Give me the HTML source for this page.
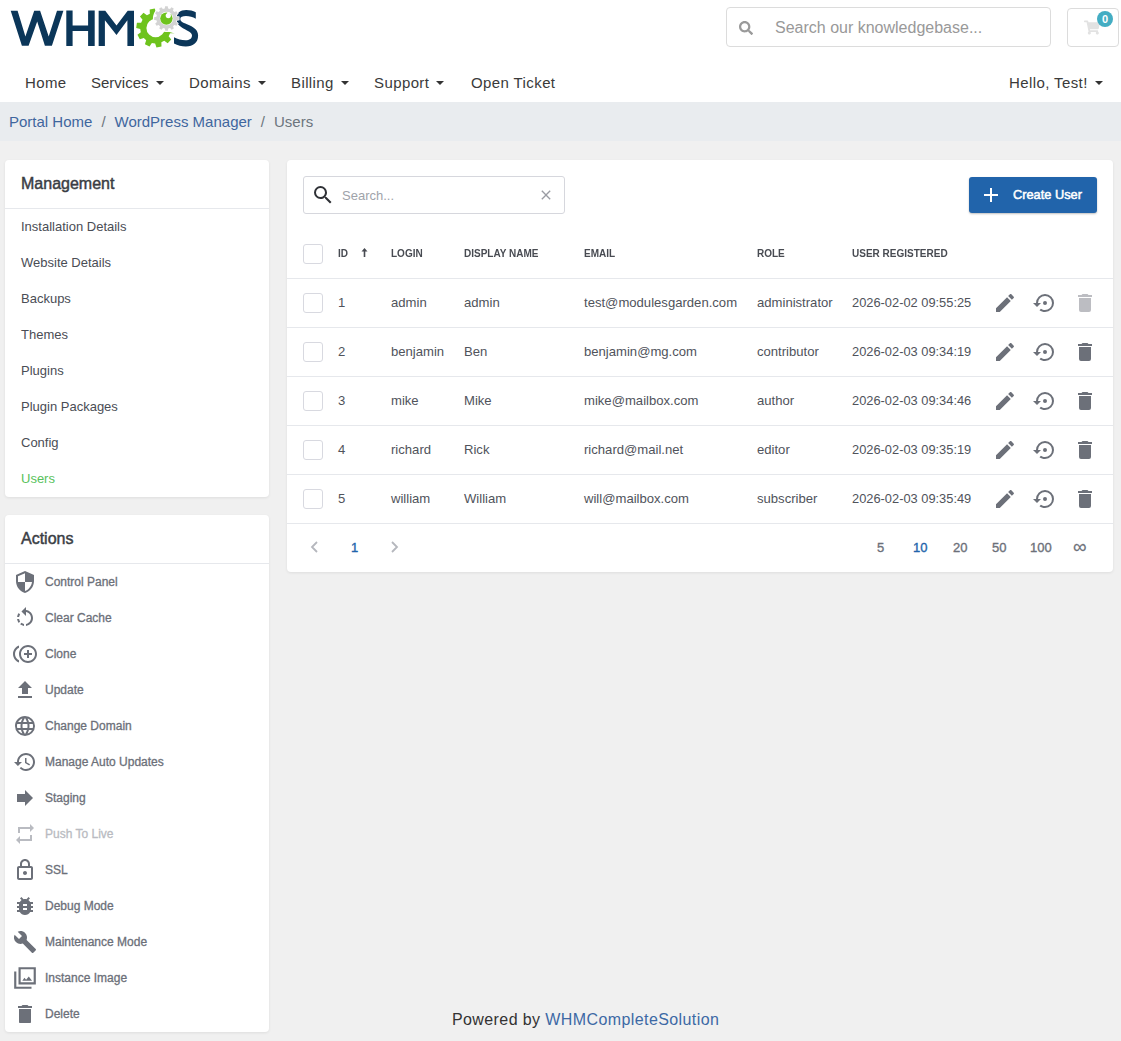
<!DOCTYPE html>
<html><head><meta charset="utf-8">
<style>
*{box-sizing:border-box;margin:0;padding:0}
html,body{width:1121px;height:1041px;overflow:hidden}
body{font-family:"Liberation Sans",sans-serif;background:#f0f0f0;position:relative;color:#4a4d55}
.abs{position:absolute}
#header{position:absolute;left:0;top:0;width:1121px;height:102px;background:#fff}
#crumb{position:absolute;left:0;top:102px;width:1121px;height:39px;background:#e9ecef}
.nav{position:absolute;top:74px;font-size:15px;color:#3a3a3a;letter-spacing:0.4px;white-space:nowrap;line-height:18px}
.caret{letter-spacing:0;display:inline-block;width:0;height:0;border-left:4.5px solid transparent;border-right:4.5px solid transparent;border-top:4.5px solid #333;vertical-align:middle;margin-left:7px;position:relative;top:-1px}
.card{position:absolute;background:#fff;border-radius:4px;box-shadow:0 1px 3px rgba(0,0,0,.08)}
.ctitle{position:absolute;left:16px;font-size:16px;color:#3a3d44;line-height:18px;-webkit-text-stroke:0.45px}
.divider{position:absolute;left:0;right:0;height:1px;background:#e6e8ec}
.mi{position:absolute;margin-top:1px;left:16px;font-size:13px;color:#4a4d55;line-height:16px;white-space:nowrap}
.ai{position:absolute;left:40px;font-size:12px;color:#6c7079;line-height:18px;white-space:nowrap;-webkit-text-stroke:0.3px}
.cb{position:absolute;margin-top:1px;left:16px;width:20px;height:20px;border:1px solid #d8d9e0;border-radius:3px;background:#fff}
.th{position:absolute;font-size:11.5px;font-weight:bold;color:#484b52;line-height:16px;white-space:nowrap;transform:scaleX(0.87);transform-origin:0 0}
.td{position:absolute;font-size:13.1px;color:#50535b;line-height:18px;white-space:nowrap}
.pg{position:absolute;margin-top:1px;font-size:13px;line-height:16px;white-space:nowrap;-webkit-text-stroke:0.35px}
.ico{position:absolute;left:8px;width:24px;height:24px}
</style></head>
<body>
<div id="header">
  <svg class="abs" style="left:0;top:0" width="210" height="56" viewBox="0 0 210 56">
<defs><mask id="gm"><rect x="0" y="0" width="210" height="56" fill="#fff"/><path d="M155.6,28 L165.86,-0.19 L181.93,13.62 L184.44,36.27Z" fill="#000"/><circle cx="166.5" cy="18.5" r="13.6" fill="#000"/></mask></defs>
<path fill="#0b3659" d="M10.7,10.7 L17.6,10.7 L25.4,36.4 L34.2,10.7 L40.1,10.7 L48.7,36.4 L57,10.7 L63.4,10.7 L51.9,45.7 L44.9,45.7 L37.2,21.4 L28.6,45.7 L21.9,45.7Z M66.3,10.6 L72.6,10.6 L72.6,25.5 L88.1,25.5 L88.1,10.6 L94.7,10.6 L94.7,46 L88.1,46 L88.1,31.1 L72.6,31.1 L72.6,46 L66.3,46Z M98.65,10.64 L105.25,10.64 L116.5,25.5 L127.7,10.64 L134,10.64 L134,45.95 L127.4,45.95 L127.4,20.2 L116.5,35.06 L104.9,20.2 L104.9,45.95 L98.65,45.95Z"/>
<path fill="#6ec31d" fill-rule="evenodd" mask="url(#gm)" d="M149.83,13.72 L149.71,9.52 L154.73,8.62 L156.07,12.61 L159.33,13.06 L161.70,9.58 L166.29,11.81 L165.03,15.83 L167.40,18.10 L171.36,16.68 L173.76,21.19 L170.39,23.69 L170.96,26.93 L175.00,28.11 L174.30,33.16 L170.09,33.21 L168.66,36.16 L171.23,39.49 L167.69,43.17 L164.26,40.73 L161.37,42.28 L161.49,46.48 L156.47,47.38 L155.13,43.39 L151.87,42.94 L149.50,46.42 L144.91,44.19 L146.17,40.17 L143.80,37.90 L139.84,39.32 L137.44,34.81 L140.81,32.31 L140.24,29.07 L136.20,27.89 L136.90,22.84 L141.11,22.79 L142.54,19.84 L139.97,16.51 L143.51,12.83 L146.94,15.27Z M164.80,28.00 A9.2,9.2 0 1,0 146.40,28.00 A9.2,9.2 0 1,0 164.80,28.00Z"/>
<path fill="#0b3659" d="M195.8,12.3 C193,10.8 189.8,10 186.2,10 C180.2,10 176.3,13 176.3,18.8 C176.3,25 181.5,27.5 187,30.4 C190.7,32.2 192,33.5 192,35.6 C192,38.8 189.5,40.3 185.5,40.3 C181.5,40.3 177.5,39.2 174,37.3 L174,43.6 C177.8,45.6 181.5,46.6 185.8,46.6 C193.5,46.6 198.1,42.5 198.1,35.6 C198.1,29.5 193.5,26.8 187,24.2 C182.5,22.4 180.3,21.3 180.3,18.7 C180.3,16.9 182.5,16.1 186,16.1 C189.5,16.1 192.8,17 195.8,18.7 Z"/>
<path fill="#d3d3d3" stroke="#fff" stroke-width="1.4" paint-order="stroke" fill-rule="evenodd" d="M164.73,8.45 L165.12,6.18 L167.71,6.16 L168.13,8.43 L169.99,8.92 L171.46,7.14 L173.72,8.42 L172.95,10.60 L174.31,11.94 L176.48,11.14 L177.79,13.38 L176.04,14.88 L176.55,16.73 L178.82,17.12 L178.84,19.71 L176.57,20.13 L176.08,21.99 L177.86,23.46 L176.58,25.72 L174.40,24.95 L173.06,26.31 L173.86,28.48 L171.62,29.79 L170.12,28.04 L168.27,28.55 L167.88,30.82 L165.29,30.84 L164.87,28.57 L163.01,28.08 L161.54,29.86 L159.28,28.58 L160.05,26.40 L158.69,25.06 L156.52,25.86 L155.21,23.62 L156.96,22.12 L156.45,20.27 L154.18,19.88 L154.16,17.29 L156.43,16.87 L156.92,15.01 L155.14,13.54 L156.42,11.28 L158.60,12.05 L159.94,10.69 L159.14,8.52 L161.38,7.21 L162.88,8.96Z M173.30,18.50 A6.8,6.8 0 1,0 159.70,18.50 A6.8,6.8 0 1,0 173.30,18.50Z"/>
<circle cx="166.4" cy="18.6" r="6.2" fill="#6ec31d"/>
<circle cx="168.3" cy="15.6" r="2.6" fill="#fff"/><path d="M167.5,12 L170,12.5 L169.5,15 L167,14.5Z" fill="#fff"/>
</svg>
  <div class="abs" style="left:726px;top:7px;width:325px;height:40px;border:1px solid #dcdcdc;border-radius:4px"></div>
  <svg class="abs" style="left:739px;top:21px" width="14" height="14" viewBox="0 0 512 512"><path fill="#9a9a9a" d="M505 442.7L405.3 343c-4.5-4.5-10.6-7-17-7H372c27.6-35.3 44-79.700 44-128C416 93.1 322.9 0 208 0S0 93.1 0 208s93.1 208 208 208c48.3 0 92.7-16.4 128-44v16.3c0 6.4 2.5 12.5 7 17l99.7 99.7c9.4 9.4 24.6 9.4 33.9 0l28.3-28.3c9.4-9.4 9.4-24.600 .1-34zM208 336c-70.7 0-128-57.200-128-128 0-70.7 57.2-128 128-128 70.7 0 128 57.2 128 128 0 70.7-57.2 128-128 128z"/></svg>
  <div class="abs" style="left:775px;top:18px;font-size:16px;line-height:19px;color:#999;white-space:nowrap">Search our knowledgebase...</div>
  <div class="abs" style="left:1067px;top:8px;width:52px;height:39px;border:1px solid #dcdcdc;border-radius:4px"></div>
  <svg class="abs" style="left:1084px;top:20px" width="16" height="15" viewBox="0 0 576 512"><path fill="#e2e2e2" d="M528.12 301.319l47.273-208C578.806 78.301 567.391 64 551.99 64H159.208l-9.166-44.810C147.758 8.021 137.930 0 126.529 0H24C10.745 0 0 10.745 0 24v16c0 13.255 10.745 24 24 24h69.883l70.248 343.435C147.325 417.100 136 435.222 136 456c0 30.928 25.072 56 56 56s56-25.072 56-56c0-15.674-6.447-29.835-16.824-40h209.647C430.447 426.165 424 440.326 424 456c0 30.928 25.072 56 56 56s56-25.072 56-56c0-22.172-12.888-41.332-31.579-50.405l5.517-24.276c3.413-15.018-8.002-29.319-23.403-29.319H218.117l-6.545-32h293.145c11.206 0 20.920-7.754 23.403-18.681z"/></svg>
  <div class="abs" style="left:1097px;top:11px;width:16px;height:16px;border-radius:50%;background:#43adc3;color:#fff;font-size:11px;font-weight:bold;line-height:16px;text-align:center">0</div>
  <div class="nav" style="left:25px">Home</div>
  <div class="nav" style="left:91px;letter-spacing:0">Services<span class="caret"></span></div>
  <div class="nav" style="left:189px">Domains<span class="caret"></span></div>
  <div class="nav" style="left:291px">Billing<span class="caret"></span></div>
  <div class="nav" style="left:374px">Support<span class="caret"></span></div>
  <div class="nav" style="left:471px">Open Ticket</div>
  <div class="nav" style="left:1009px"><span>Hello, Test!</span><span class="caret" style="margin-left:7px"></span></div>
</div>
<div id="crumb">
  <div class="abs" style="left:9px;top:11px;font-size:15px;line-height:18px;color:#3f669e;white-space:nowrap">Portal Home<span style="color:#6c757d;padding:0 9px">/</span>WordPress Manager<span style="color:#6c757d;padding:0 9px">/</span><span style="color:#6c757d">Users</span></div>
</div>

<div class="card" style="left:5px;top:160px;width:264px;height:337px">
  <div class="ctitle" style="top:15px">Management</div>
  <div class="divider" style="top:48px"></div>
  <div class="mi" style="top:58px">Installation Details</div>
  <div class="mi" style="top:94px">Website Details</div>
  <div class="mi" style="top:130px">Backups</div>
  <div class="mi" style="top:166px">Themes</div>
  <div class="mi" style="top:202px">Plugins</div>
  <div class="mi" style="top:238px">Plugin Packages</div>
  <div class="mi" style="top:274px">Config</div>
  <div class="mi" style="top:310px;color:#58c25c">Users</div>
</div>

<div class="card" style="left:5px;top:515px;width:264px;height:517px">
  <div class="ctitle" style="top:15px">Actions</div>
  <div class="divider" style="top:48px"></div>
  <svg class="ico" style="top:55px" width="24" height="24" viewBox="0 0 24 24"><path fill="#6c7079" d="M12 1L3 5v6c0 5.55 3.84 10.74 9 12 5.16-1.26 9-6.45 9-12V5l-9-4zm0 10.99h7c-.53 4.12-3.28 7.79-7 8.94V12H5V6.3l7-3.11v8.8z"/></svg>
  <div class="ai" style="top:58px;color:#6c7079">Control Panel</div>
  <svg class="ico" style="top:91px" width="24" height="24" viewBox="0 0 24 24"><path fill="#6c7079" d="M7.11 8.53L5.7 7.11C4.8 8.27 4.24 9.61 4.07 11h2.02c.14-.87.49-1.72 1.02-2.47zM6.09 13H4.07c.17 1.39.72 2.73 1.62 3.89l1.41-1.42c-.52-.75-.87-1.59-1.01-2.47zm1.01 5.32c1.160.9 2.51 1.44 3.9 1.61V17.9c-.87-.15-1.71-.49-2.46-1.03L7.1 18.32zM13 4.07V1L8.45 5.55 13 10V6.09c2.84.48 5 2.94 5 5.91s-2.16 5.43-5 5.91v2.02c3.95-.49 7-3.85 7-7.930s-3.05-7.44-7-7.93z"/></svg>
  <div class="ai" style="top:94px;color:#6c7079">Clear Cache</div>
  <svg class="ico" style="top:127px" width="24" height="24" viewBox="0 0 24 24"><path fill="#6c7079" d="M16 8h-2v3h-3v2h3v3h2v-3h3v-2h-3zM2 12c0-2.79 1.64-5.2 4.01-6.32V3.52C2.52 4.76 0 8.09 0 12s2.52 7.24 6.01 8.48v-2.16C3.64 17.2 2 14.79 2 12zm13-9c-4.96 0-9 4.04-9 9s4.04 9 9 9 9-4.04 9-9-4.04-9-9-9zm0 16c-3.86 0-7-3.14-7-7s3.14-7 7-7 7 3.14 7 7-3.14 7-7 7z"/></svg>
  <div class="ai" style="top:130px;color:#6c7079">Clone</div>
  <svg class="ico" style="top:163px" width="24" height="24" viewBox="0 0 24 24"><path fill="#6c7079" d="M9 16h6v-6h4l-7-7-7 7h4zm-4 2h14v2H5z"/></svg>
  <div class="ai" style="top:166px;color:#6c7079">Update</div>
  <svg class="ico" style="top:199px" width="24" height="24" viewBox="0 0 24 24"><path fill="#6c7079" d="M16.36,14C16.44,13.34 16.5,12.68 16.5,12C16.5,11.32 16.44,10.66 16.36,10H19.74C19.9,10.64 20,11.31 20,12C20,12.69 19.9,13.36 19.74,14M14.59,19.56C15.19,18.45 15.65,17.25 15.97,16H18.92C17.96,17.65 16.43,18.93 14.59,19.56M14.34,14H9.66C9.56,13.34 9.5,12.68 9.5,12C9.5,11.32 9.56,10.65 9.66,10H14.34C14.43,10.65 14.5,11.32 14.5,12C14.5,12.68 14.43,13.34 14.34,14M12,19.96C11.17,18.76 10.5,17.43 10.09,16H13.91C13.5,17.43 12.83,18.76 12,19.96M8,8H5.08C6.03,6.34 7.57,5.06 9.4,4.44C8.8,5.55 8.35,6.75 8,8M5.08,16H8C8.35,17.25 8.8,18.45 9.4,19.56C7.57,18.93 6.03,17.65 5.08,16M4.26,14C4.1,13.36 4,12.69 4,12C4,11.31 4.1,10.64 4.26,10H7.64C7.56,10.66 7.5,11.32 7.5,12C7.5,12.68 7.56,13.34 7.64,14M12,4.03C12.83,5.23 13.5,6.57 13.91,8H10.09C10.5,6.57 11.17,5.23 12,4.03M18.92,8H15.97C15.65,6.75 15.19,5.55 14.59,4.44C16.43,5.07 17.960,6.34 18.92,8M12,2C6.47,2 2,6.5 2,12A10,10 0 0,0 12,22A10,10 0 0,0 22,12A10,10 0 0,0 12,2Z"/></svg>
  <div class="ai" style="top:202px;color:#6c7079">Change Domain</div>
  <svg class="ico" style="top:235px" width="24" height="24" viewBox="0 0 24 24"><path fill="#6c7079" d="M13 3c-4.97 0-9 4.03-9 9H1l3.89 3.89.07.14L9 12H6c0-3.87 3.13-7 7-7s7 3.13 7 7-3.13 7-7 7c-1.93 0-3.68-.79-4.94-2.06l-1.42 1.42C8.27 19.99 10.51 21 13 21c4.97 0 9-4.03 9-9s-4.03-9-9-9zm-1 5v5l4.28 2.54.72-1.21-3.5-2.08V8H12z"/></svg>
  <div class="ai" style="top:238px;color:#6c7079">Manage Auto Updates</div>
  <svg class="ico" style="top:271px" width="24" height="24" viewBox="0 0 24 24"><path fill="#6c7079" d="M12 8V4l8 8-8 8v-4H4V8z"/></svg>
  <div class="ai" style="top:274px;color:#6c7079">Staging</div>
  <svg class="ico" style="top:307px" width="24" height="24" viewBox="0 0 24 24"><path fill="#b9bbc1" d="M7 7h10v3l4-4-4-4v3H5v6h2V7zm10 10H7v-3l-4 4 4 4v-3h12v-6h-2v4z"/></svg>
  <div class="ai" style="top:310px;color:#b9bbc1">Push To Live</div>
  <svg class="ico" style="top:343px" width="24" height="24" viewBox="0 0 24 24"><path fill="#6c7079" d="M18 8h-1V6c0-2.76-2.24-5-5-5S7 3.24 7 6v2H6c-1.1 0-2 .9-2 2v10c0 1.1.9 2 2 2h12c1.1 0 2-.9 2-2V10c0-1.1-.9-2-2-2zM9 6c0-1.66 1.34-3 3-3s3 1.34 3 3v2H9V6zm9 14H6V10h12v10zm-6-3c1.1 0 2-.9 2-2s-.9-2-2-2-2 .9-2 2 .9 2 2 2z"/></svg>
  <div class="ai" style="top:346px;color:#6c7079">SSL</div>
  <svg class="ico" style="top:379px" width="24" height="24" viewBox="0 0 24 24"><path fill="#6c7079" d="M14,12H10V10H14M14,16H10V14H14M20,8H17.19C16.74,7.22 16.12,6.55 15.37,6.04L17,4.41L15.59,3L13.42,5.17C12.96,5.06 12.5,5 12,5C11.5,5 11.04,5.06 10.59,5.17L8.41,3L7,4.41L8.62,6.04C7.88,6.55 7.26,7.22 6.81,8H4V10H6.09C6.04,10.33 6,10.66 6,11V12H4V14H6V15C6,15.34 6.04,15.67 6.09,16H4V18H6.81C7.85,19.79 9.78,21 12,21C14.22,21 16.15,19.79 17.19,18H20V16H17.91C17.96,15.67 18,15.34 18,15V14H20V12H18V11C18,10.66 17.96,10.33 17.91,10H20V8Z"/></svg>
  <div class="ai" style="top:382px;color:#6c7079">Debug Mode</div>
  <svg class="ico" style="top:415px" width="24" height="24" viewBox="0 0 24 24"><path fill="#6c7079" d="M22.7 19l-9.1-9.1c.9-2.3.4-5-1.5-6.9-2-2-5-2.4-7.4-1.3L9 6 6 9 1.6 4.7C.4 7.1.9 10.1 2.9 12.1c1.9 1.9 4.6 2.4 6.9 1.5l9.1 9.1c.4.4 1 .4 1.4 0l2.3-2.3c.5-.4.5-1.1.1-1.4z"/></svg>
  <div class="ai" style="top:418px;color:#6c7079">Maintenance Mode</div>
  <svg class="ico" style="top:450px;left:7px;width:26px;height:26px" width="26" height="26" viewBox="0 0 24 24"><path fill="#6c7079" d="M6,2H22V18H6Z M8,4V16H20V4Z M2,6H4V20H18V22H2Z M9.5,14.5L11.5,11.8L13,13.6L15.5,10.6L18.5,14.5Z" fill-rule="evenodd"/></svg>
  <div class="ai" style="top:454px;color:#6c7079">Instance Image</div>
  <svg class="ico" style="top:487px" width="24" height="24" viewBox="0 0 24 24"><path fill="#6c7079" d="M19,4H15.5L14.5,3H9.5L8.5,4H5V6H19M6,20.2A0.8,0.8 0 0,0 6.8,21H17.2A0.8,0.8 0 0,0 18,20.2V7H6V20Z"/></svg>
  <div class="ai" style="top:490px;color:#6c7079">Delete</div>
</div>

<div class="card" style="left:287px;top:160px;width:826px;height:412px">

  <div class="abs" style="left:16px;top:16px;width:262px;height:38px;border:1px solid #d6d7dd;border-radius:3px"></div>
  <svg class="abs" style="left:24px;top:23px" width="24" height="24" viewBox="0 0 24 24"><path fill="#2f3136" d="M9.5,3A6.5,6.5 0 0,1 16,9.5C16,11.11 15.41,12.59 14.440,13.73L14.71,14H15.5L20.5,19L19,20.5L14,15.5V14.71L13.73,14.44C12.59,15.41 11.11,16 9.5,16A6.5,6.5 0 0,1 3,9.5A6.5,6.5 0 0,1 9.5,3M9.5,5C7,5 5,7 5,9.5C5,12 7,14 9.5,14C12,14 14,12 14,9.5C14,7 12,5 9.5,5Z"/></svg>
  <div class="abs" style="left:55px;top:28px;font-size:13px;line-height:16px;color:#a0a3aa">Search...</div>
  <svg class="abs" style="left:251px;top:27px" width="16" height="16" viewBox="0 0 24 24"><path fill="#9a9ca3" d="M19,6.41L17.590,5L12,10.59L6.41,5L5,6.41L10.59,12L5,17.59L6.41,19L12,13.41L17.59,19L19,17.59L13.41,12L19,6.41Z"/></svg>
  <div class="abs" style="left:682px;top:17px;width:128px;height:36px;background:#2164ab;border-radius:3px;box-shadow:0 1px 2px rgba(0,0,0,.25)"></div>
  <svg class="abs" style="left:692px;top:23px" width="24" height="24" viewBox="0 0 24 24"><path fill="#fff" d="M19 13h-6v6h-2v-6H5v-2h6V5h2v6h6v2z"/></svg>
  <div class="abs" style="left:726px;top:27px;font-size:12.8px;line-height:16px;color:#fff;-webkit-text-stroke:0.5px">Create User</div>

<div class="cb" style="top:83px"></div>
<div class="th" style="left:51px;top:85px">ID</div>
<div class="th" style="left:104px;top:85px">LOGIN</div>
<div class="th" style="left:177px;top:85px">DISPLAY NAME</div>
<div class="th" style="left:297px;top:85px">EMAIL</div>
<div class="th" style="left:470px;top:85px">ROLE</div>
<div class="th" style="left:565px;top:85px">USER REGISTERED</div>
<svg class="abs" style="left:74px;top:88px" width="7" height="9" viewBox="0 0 7 9"><path fill="#484b52" d="M3.5,0L6.5,3.5H4.3V9H2.7V3.5H0.5Z"/></svg>
<div class="divider" style="top:118px"></div>
<div class="cb" style="top:132px"></div>
<div class="td" style="left:51px;top:134px">1</div>
<div class="td" style="left:104px;top:134px">admin</div>
<div class="td" style="left:177px;top:134px">admin</div>
<div class="td" style="left:297px;top:134px">test@modulesgarden.com</div>
<div class="td" style="left:470px;top:134px">administrator</div>
<div class="td" style="left:565px;top:134px;font-size:12.85px">2026-02-02 09:55:25</div>
<svg class="abs" style="left:706px;top:131px" width="24" height="24" viewBox="0 0 24 24"><path fill="#6c7079" d="M20.71,7.04C21.1,6.65 21.1,6 20.71,5.63L18.37,3.29C18,2.9 17.35,2.9 16.96,3.29L15.12,5.12L18.87,8.87M3,17.25V21H6.75L17.81,9.93L14.06,6.18L3,17.25Z"/></svg>
<svg class="abs" style="left:746px;top:131px" width="24" height="24" viewBox="0 0 24 24"><path fill="#6c7079" d="M12,3A9,9 0 0,0 3,12H0L4,16L8,12H5A7,7 0 0,1 12,5A7,7 0 0,1 19,12A7,7 0 0,1 12,19C10.5,19 9.09,18.5 7.94,17.7L6.5,19.14C8.04,20.3 9.94,21 12,21A9,9 0 0,0 21,12A9,9 0 0,0 12,3M14,12A2,2 0 0,0 12,10A2,2 0 0,0 10,12A2,2 0 0,0 12,14A2,2 0 0,0 14,12Z"/></svg>
<svg class="abs" style="left:786px;top:131px" width="24" height="24" viewBox="0 0 24 24"><path fill="#bcbdc2" d="M19,4H15.5L14.5,3H9.5L8.5,4H5V6H19M6,19A2,2 0 0,0 8,21H16A2,2 0 0,0 18,19V7H6V19Z"/></svg>
<div class="divider" style="top:167px"></div>
<div class="cb" style="top:181px"></div>
<div class="td" style="left:51px;top:183px">2</div>
<div class="td" style="left:104px;top:183px">benjamin</div>
<div class="td" style="left:177px;top:183px">Ben</div>
<div class="td" style="left:297px;top:183px">benjamin@mg.com</div>
<div class="td" style="left:470px;top:183px">contributor</div>
<div class="td" style="left:565px;top:183px;font-size:12.85px">2026-02-03 09:34:19</div>
<svg class="abs" style="left:706px;top:180px" width="24" height="24" viewBox="0 0 24 24"><path fill="#6c7079" d="M20.71,7.04C21.1,6.65 21.1,6 20.71,5.63L18.37,3.29C18,2.9 17.35,2.9 16.96,3.29L15.12,5.12L18.87,8.87M3,17.25V21H6.75L17.81,9.93L14.06,6.18L3,17.25Z"/></svg>
<svg class="abs" style="left:746px;top:180px" width="24" height="24" viewBox="0 0 24 24"><path fill="#6c7079" d="M12,3A9,9 0 0,0 3,12H0L4,16L8,12H5A7,7 0 0,1 12,5A7,7 0 0,1 19,12A7,7 0 0,1 12,19C10.5,19 9.09,18.5 7.94,17.7L6.5,19.14C8.04,20.3 9.94,21 12,21A9,9 0 0,0 21,12A9,9 0 0,0 12,3M14,12A2,2 0 0,0 12,10A2,2 0 0,0 10,12A2,2 0 0,0 12,14A2,2 0 0,0 14,12Z"/></svg>
<svg class="abs" style="left:786px;top:180px" width="24" height="24" viewBox="0 0 24 24"><path fill="#6c7079" d="M19,4H15.5L14.5,3H9.5L8.5,4H5V6H19M6,19A2,2 0 0,0 8,21H16A2,2 0 0,0 18,19V7H6V19Z"/></svg>
<div class="divider" style="top:216px"></div>
<div class="cb" style="top:230px"></div>
<div class="td" style="left:51px;top:232px">3</div>
<div class="td" style="left:104px;top:232px">mike</div>
<div class="td" style="left:177px;top:232px">Mike</div>
<div class="td" style="left:297px;top:232px">mike@mailbox.com</div>
<div class="td" style="left:470px;top:232px">author</div>
<div class="td" style="left:565px;top:232px;font-size:12.85px">2026-02-03 09:34:46</div>
<svg class="abs" style="left:706px;top:229px" width="24" height="24" viewBox="0 0 24 24"><path fill="#6c7079" d="M20.71,7.04C21.1,6.65 21.1,6 20.71,5.63L18.37,3.29C18,2.9 17.35,2.9 16.96,3.29L15.12,5.12L18.87,8.87M3,17.25V21H6.75L17.81,9.93L14.06,6.18L3,17.25Z"/></svg>
<svg class="abs" style="left:746px;top:229px" width="24" height="24" viewBox="0 0 24 24"><path fill="#6c7079" d="M12,3A9,9 0 0,0 3,12H0L4,16L8,12H5A7,7 0 0,1 12,5A7,7 0 0,1 19,12A7,7 0 0,1 12,19C10.5,19 9.09,18.5 7.94,17.7L6.5,19.14C8.04,20.3 9.94,21 12,21A9,9 0 0,0 21,12A9,9 0 0,0 12,3M14,12A2,2 0 0,0 12,10A2,2 0 0,0 10,12A2,2 0 0,0 12,14A2,2 0 0,0 14,12Z"/></svg>
<svg class="abs" style="left:786px;top:229px" width="24" height="24" viewBox="0 0 24 24"><path fill="#6c7079" d="M19,4H15.5L14.5,3H9.5L8.5,4H5V6H19M6,19A2,2 0 0,0 8,21H16A2,2 0 0,0 18,19V7H6V19Z"/></svg>
<div class="divider" style="top:265px"></div>
<div class="cb" style="top:279px"></div>
<div class="td" style="left:51px;top:281px">4</div>
<div class="td" style="left:104px;top:281px">richard</div>
<div class="td" style="left:177px;top:281px">Rick</div>
<div class="td" style="left:297px;top:281px">richard@mail.net</div>
<div class="td" style="left:470px;top:281px">editor</div>
<div class="td" style="left:565px;top:281px;font-size:12.85px">2026-02-03 09:35:19</div>
<svg class="abs" style="left:706px;top:278px" width="24" height="24" viewBox="0 0 24 24"><path fill="#6c7079" d="M20.71,7.04C21.1,6.65 21.1,6 20.71,5.63L18.37,3.29C18,2.9 17.35,2.9 16.96,3.29L15.12,5.12L18.87,8.87M3,17.25V21H6.75L17.81,9.93L14.06,6.18L3,17.25Z"/></svg>
<svg class="abs" style="left:746px;top:278px" width="24" height="24" viewBox="0 0 24 24"><path fill="#6c7079" d="M12,3A9,9 0 0,0 3,12H0L4,16L8,12H5A7,7 0 0,1 12,5A7,7 0 0,1 19,12A7,7 0 0,1 12,19C10.5,19 9.09,18.5 7.94,17.7L6.5,19.14C8.04,20.3 9.94,21 12,21A9,9 0 0,0 21,12A9,9 0 0,0 12,3M14,12A2,2 0 0,0 12,10A2,2 0 0,0 10,12A2,2 0 0,0 12,14A2,2 0 0,0 14,12Z"/></svg>
<svg class="abs" style="left:786px;top:278px" width="24" height="24" viewBox="0 0 24 24"><path fill="#6c7079" d="M19,4H15.5L14.5,3H9.5L8.5,4H5V6H19M6,19A2,2 0 0,0 8,21H16A2,2 0 0,0 18,19V7H6V19Z"/></svg>
<div class="divider" style="top:314px"></div>
<div class="cb" style="top:328px"></div>
<div class="td" style="left:51px;top:330px">5</div>
<div class="td" style="left:104px;top:330px">william</div>
<div class="td" style="left:177px;top:330px">William</div>
<div class="td" style="left:297px;top:330px">will@mailbox.com</div>
<div class="td" style="left:470px;top:330px">subscriber</div>
<div class="td" style="left:565px;top:330px;font-size:12.85px">2026-02-03 09:35:49</div>
<svg class="abs" style="left:706px;top:327px" width="24" height="24" viewBox="0 0 24 24"><path fill="#6c7079" d="M20.71,7.04C21.1,6.65 21.1,6 20.71,5.63L18.37,3.29C18,2.9 17.35,2.9 16.96,3.29L15.12,5.12L18.87,8.87M3,17.25V21H6.75L17.81,9.93L14.06,6.18L3,17.25Z"/></svg>
<svg class="abs" style="left:746px;top:327px" width="24" height="24" viewBox="0 0 24 24"><path fill="#6c7079" d="M12,3A9,9 0 0,0 3,12H0L4,16L8,12H5A7,7 0 0,1 12,5A7,7 0 0,1 19,12A7,7 0 0,1 12,19C10.5,19 9.09,18.5 7.94,17.7L6.5,19.14C8.04,20.3 9.94,21 12,21A9,9 0 0,0 21,12A9,9 0 0,0 12,3M14,12A2,2 0 0,0 12,10A2,2 0 0,0 10,12A2,2 0 0,0 12,14A2,2 0 0,0 14,12Z"/></svg>
<svg class="abs" style="left:786px;top:327px" width="24" height="24" viewBox="0 0 24 24"><path fill="#6c7079" d="M19,4H15.5L14.5,3H9.5L8.5,4H5V6H19M6,19A2,2 0 0,0 8,21H16A2,2 0 0,0 18,19V7H6V19Z"/></svg>
<div class="divider" style="top:363px"></div>
<svg class="abs" style="left:20px;top:379px" width="16" height="16" viewBox="0 0 16 16"><path fill="none" stroke="#b5b7bd" stroke-width="1.8" d="M10,3L5,8L10,13"/></svg>
<div class="pg" style="left:64px;top:379px;color:#2164ab">1</div>
<svg class="abs" style="left:99px;top:379px" width="16" height="16" viewBox="0 0 16 16"><path fill="none" stroke="#b5b7bd" stroke-width="1.8" d="M6,3L11,8L6,13"/></svg>
<div class="pg" style="left:590px;top:379px;color:#6c7079">5</div>
<div class="pg" style="left:626px;top:379px;color:#2164ab">10</div>
<div class="pg" style="left:666px;top:379px;color:#6c7079">20</div>
<div class="pg" style="left:705px;top:379px;color:#6c7079">50</div>
<div class="pg" style="left:743px;top:379px;color:#6c7079">100</div>
<div class="pg" style="left:786px;top:376px;color:#6c7079;font-size:19px;line-height:20px;-webkit-text-stroke:0.2px">&#8734;</div>
</div>

<div class="abs" style="left:452px;top:1010px;font-size:16px;line-height:19px;color:#333;white-space:nowrap;letter-spacing:0.4px">Powered by <span style="color:#3d69a5">WHMCompleteSolution</span></div>
</body></html>
